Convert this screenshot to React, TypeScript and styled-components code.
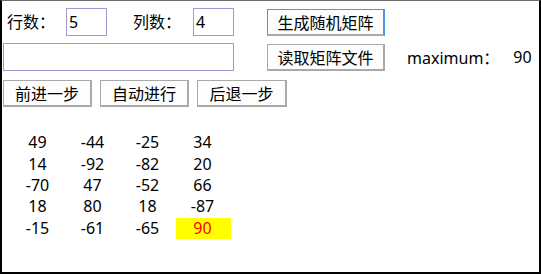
import React from "react";
import styled, { createGlobalStyle } from "styled-components";

const Global = createGlobalStyle`
  html, body { margin: 0; padding: 0; background: #fff; }
  body { font-family: "Noto Sans", "Noto Sans CJK SC", sans-serif; font-size: 16px; color: #000; }
`;

const Frame = styled.div`
  box-sizing: border-box;
  width: 541px;
  height: 274px;
  border-top: 1px solid #6e6e6e;
  border-left: 2px solid #000;
  border-right: 2px solid #000;
  border-bottom: 2px solid #000;
  padding: 7px 0 0 1px;
  overflow: hidden;
`;

const Row = styled.div<{ $top?: number }>`
  display: flex;
  align-items: center;
  height: 28px;
  margin-top: ${(p) => p.$top ?? 0}px;
`;

const Label = styled.span<{ $w: number; $ml?: number }>`
  box-sizing: border-box;
  width: ${(p) => p.$w}px;
  margin-left: ${(p) => p.$ml ?? 0}px;
  padding-left: ${(p) => (p.$ml ? 0 : 4)}px;
  white-space: nowrap;
  line-height: 28px;
`;

const Input = styled.input<{ $w: number }>`
  box-sizing: border-box;
  width: ${(p) => p.$w}px;
  height: 28px;
  margin: 0;
  border: 1px solid #9d9ad3;
  padding: 0 2px;
  font-family: "Noto Sans", "Noto Sans CJK SC", sans-serif;
  font-size: 16px;
  color: #000;
  background: #fff;
  outline: none;
`;

const Button = styled.button<{ $w: number; $ml?: number; $focus?: boolean }>`
  box-sizing: border-box;
  width: ${(p) => p.$w}px;
  height: 27px;
  margin: 0 0 0 ${(p) => p.$ml ?? 0}px;
  padding: 0;
  background: #fdfdfd;
  border-style: solid;
  border-width: 1px 2px 2px 1px;
  border-color: ${(p) =>
    p.$focus ? "#4c95e6 #4c95e6 #a9a9a9 #4c95e6" : "#a9a9a9"};
  font-family: "Noto Sans CJK SC", "Noto Sans", sans-serif;
  font-size: 16px;
  line-height: 22px;
  color: #000;
  white-space: nowrap;
`;

const Max = styled.span`
  margin-left: 22px;
  white-space: nowrap;
`;

const MaxValue = styled.span`
  margin-left: 14px;
`;

const Matrix = styled.div`
  display: grid;
  grid-template-columns: repeat(4, 55px);
  grid-auto-rows: 21.4px;
  margin: 25px 0 0 8px;
`;

const Cell = styled.div<{ $hi?: boolean }>`
  display: flex;
  align-items: center;
  justify-content: center;
  padding-right: 2px;
  background: ${(p) => (p.$hi ? "#ffff00" : "transparent")};
  color: ${(p) => (p.$hi ? "#ff0000" : "#000")};
  line-height: 21px;
`;

const data = [
  [49, -44, -25, 34],
  [14, -92, -82, 20],
  [-70, 47, -52, 66],
  [18, 80, 18, -87],
  [-15, -61, -65, 90],
];

export default function App() {
  return (
    <>
      <Global />
      <Frame>
        <Row>
          <Label $w={63}>行数：</Label>
          <Input $w={41} defaultValue="5" />
          <Label $w={60} $ml={26}>列数：</Label>
          <Input $w={41} defaultValue="4" />
          <Button $w={118} $ml={33} $focus>生成随机矩阵</Button>
        </Row>
        <Row $top={7}>
          <Input $w={231} defaultValue="" />
          <Button $w={118} $ml={33}>读取矩阵文件</Button>
          <Max>maximum：</Max>
          <MaxValue>90</MaxValue>
        </Row>
        <Row $top={8}>
          <Button $w={89}>前进一步</Button>
          <Button $w={89} $ml={8}>自动进行</Button>
          <Button $w={90} $ml={8}>后退一步</Button>
        </Row>
        <Matrix>
          {data.map((row, r) =>
            row.map((v, c) => (
              <Cell key={`${r}-${c}`} $hi={r === 4 && c === 3}>
                {v}
              </Cell>
            ))
          )}
        </Matrix>
      </Frame>
    </>
  );
}
